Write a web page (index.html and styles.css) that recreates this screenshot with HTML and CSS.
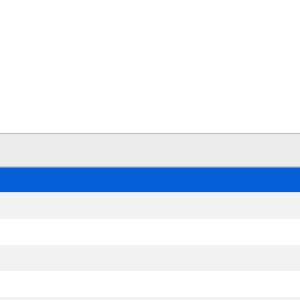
FILE: index.html
```html
<!DOCTYPE html>
<html lang="en">
<head>
  <meta charset="UTF-8" />
  <title>List</title>
  <link rel="stylesheet" href="styles.css">
</head>
<body>
  <div class="toolbar"></div>

  <div class="list">
    <div class="list-header"></div>
    <div class="row selected"></div>
    <div class="row odd"></div>
    <div class="row"></div>
    <div class="row odd"></div>
    <div class="row"></div>
    <div class="row odd"></div>
  </div>
</body>
</html>
```

FILE: styles.css
```css
* {
  margin: 0; padding: 0;
  box-sizing: border-box;
  font-family: 'Liberation Sans', sans-serif;
}

body {
  background: #ffffff;
  height: 100vh;
  overflow: hidden;
}

.toolbar {
  height: 133px;
}

.list {
  display: flex;
  flex-direction: column;
}

.list-header {
  height: 34px;
  background: #ebebeb;
  border-top: 1px solid #bdbdbd;
  border-bottom: 1px solid #c8c8c8;
}

.row {
  height: 26px;
  flex-shrink: 0;
  background: #ffffff;
}

.row.odd {
  background: #f2f2f2;
}

.row.selected {
  background: #0560d8;
  border-top: 1px solid #5a93e0;
  border-bottom: 1px solid #d4e3f7;
}
```
